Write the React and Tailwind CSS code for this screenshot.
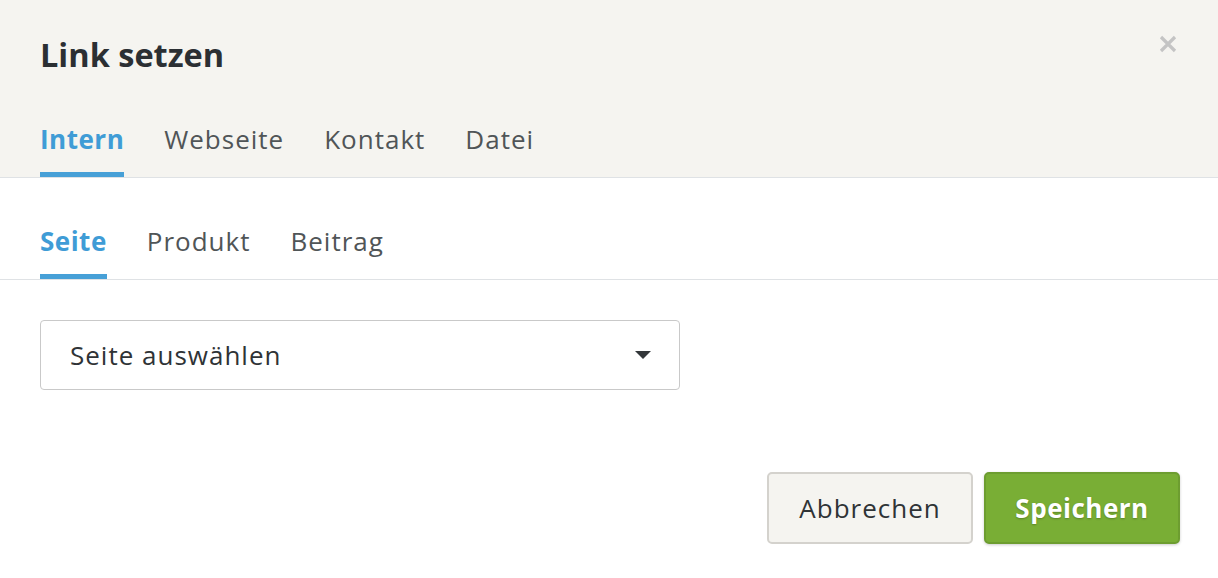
import React, { useState } from "react";

const mainTabs = ["Intern", "Webseite", "Kontakt", "Datei"];
const subTabs = ["Seite", "Produkt", "Beitrag"];

const tabClass = (active) =>
  "text-[26px] leading-[36px] pb-[15px] border-b-[5px] " +
  (active
    ? "text-[#3f9cd6] font-bold tracking-[0.5px] border-[#47a0d7]"
    : "text-[#505557] tracking-[1px] border-transparent");

const App = () => {
  const [tab, setTab] = useState("Intern");
  const [sub, setSub] = useState("Seite");

  return (
    <div
      className="w-[1218px] h-[578px] bg-white overflow-hidden"
      style={{ fontFamily: "'Open Sans', Lato, sans-serif" }}
    >
      {/* header */}
      <div className="relative bg-[#f5f4f0] px-10 pt-[37px] border-b border-[#dfe2e5]">
        <h2 className="text-[32.5px] leading-[36px] font-bold text-[#2b2f33]">Link setzen</h2>
        <button className="absolute right-[41px] top-[35px] w-[18px] h-[18px] text-[#c4c4c4]">
          <svg viewBox="0 0 18 18" className="w-full h-full">
            <path d="M2 2 L16 16 M16 2 L2 16" stroke="currentColor" strokeWidth="3.2" />
          </svg>
        </button>
        <div className="flex gap-10 mt-[48px]">
          {mainTabs.map((t) => (
            <button key={t} onClick={() => setTab(t)} className={tabClass(tab === t)}>
              {t}
            </button>
          ))}
        </div>
      </div>

      {/* sub tabs */}
      <div className="flex gap-10 px-10 pt-[45px] border-b border-[#dfe2e5]">
        {subTabs.map((t) => (
          <button key={t} onClick={() => setSub(t)} className={tabClass(sub === t)}>
            {t}
          </button>
        ))}
      </div>

      {/* select */}
      <div className="px-10 pt-10">
        <div className="w-[640px] h-[70px] border border-[#c9c9c9] rounded-[4px] flex items-center justify-between pl-[29px] pr-[28px]">
          <span className="text-[26px] tracking-[1px] text-[#2f3336]">Seite auswählen</span>
          <svg width="16" height="8" viewBox="0 0 16 8">
            <path d="M0 0 L16 0 L8 8 Z" fill="#33373a" />
          </svg>
        </div>
      </div>

      {/* footer */}
      <div className="flex justify-end gap-[11px] pr-[38px] mt-[82px]">
        <button className="w-[206px] h-[72px] rounded-[5px] border-2 border-[#d4d2cd] bg-[#f5f4f0] text-[26px] tracking-[1px] text-[#2f3336]">
          Abbrechen
        </button>
        <button className="w-[196px] h-[72px] rounded-[5px] border-2 border-[#6d9d30] bg-[#79ae35] text-[26px] tracking-[0.5px] font-bold text-white shadow-[0_1px_3px_rgba(0,0,0,0.2)] [text-shadow:0_1px_2px_rgba(0,0,0,0.25)]">
          Speichern
        </button>
      </div>
    </div>
  );
};

export default App;
